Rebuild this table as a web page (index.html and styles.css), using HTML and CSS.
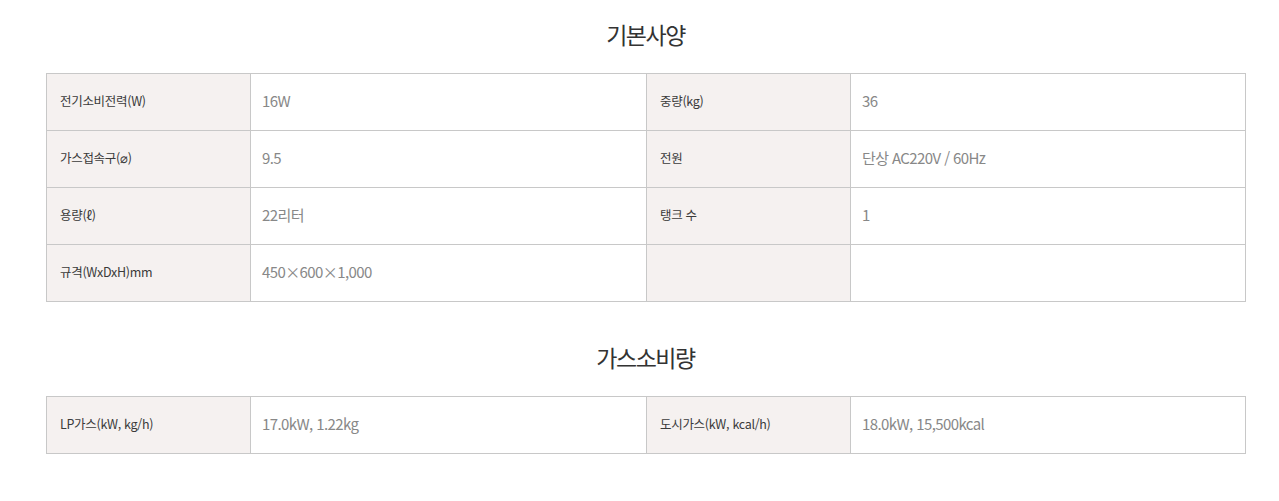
FILE: index.html
```html
<!DOCTYPE html>
<html lang="ko">
<head>
<meta charset="utf-8">
<title>사양</title>
<link rel="stylesheet" href="styles.css">
</head>
<body>
<section class="spec">
  <h2 class="spec-title">기본사양</h2>
  <table class="spec-table">
    <colgroup><col class="c-label"><col class="c-value"><col class="c-label"><col class="c-value2"></colgroup>
    <tbody>
      <tr><th>전기소비전력(W)</th><td>16W</td><th>중량(kg)</th><td>36</td></tr>
      <tr><th>가스접속구(⌀)</th><td>9.5</td><th>전원</th><td>단상 AC220V / 60Hz</td></tr>
      <tr><th>용량(ℓ)</th><td>22리터</td><th>탱크 수</th><td>1</td></tr>
      <tr><th>규격(WxDxH)mm</th><td>450×600×1,000</td><th></th><td></td></tr>
    </tbody>
  </table>
</section>
<section class="spec spec-second">
  <h2 class="spec-title">가스소비량</h2>
  <table class="spec-table">
    <colgroup><col class="c-label"><col class="c-value"><col class="c-label"><col class="c-value2"></colgroup>
    <tbody>
      <tr><th>LP가스(kW, kg/h)</th><td>17.0kW, 1.22kg</td><th>도시가스(kW, kcal/h)</th><td>18.0kW, 15,500kcal</td></tr>
    </tbody>
  </table>
</section>
</body>
</html>
```
FILE: styles.css
```css
html, body {
  margin: 0;
  padding: 0;
  background: #ffffff;
}
body {
  font-family: "Noto Sans CJK KR", "Noto Sans", sans-serif;
  color: #333333;
}
.spec {
  width: 1199px;
  margin-left: 46px;
}
.spec-second {
  margin-top: 21px;
}
.spec-title {
  margin: 0;
  padding-top: 17px;
  height: 34px;
  line-height: 34px;
  margin-bottom: 22px;
  text-align: center;
  font-size: 23px;
  font-weight: 400;
  letter-spacing: -1.5px;
  color: #333333;
}
.spec-table {
  width: 1199px;
  border-collapse: collapse;
  table-layout: fixed;
}
.c-label { width: 204px; }
.c-value { width: 396px; }
.c-value2 { width: 395px; }
.spec-table th,
.spec-table td {
  border: 1px solid #c8c8c8;
  height: 57px;
  padding: 0 12px 4px 13px;
  text-align: left;
  vertical-align: middle;
  box-sizing: border-box;
}
.spec-table th {
  background: #f5f1f0;
  font-size: 12.5px;
  font-weight: 400;
  letter-spacing: -0.3px;
  color: #3a3a3a;
}
.spec-table td {
  background: #ffffff;
  font-size: 15px;
  letter-spacing: -0.6px;
  color: #888888;
  padding-left: 11px;
}
```
